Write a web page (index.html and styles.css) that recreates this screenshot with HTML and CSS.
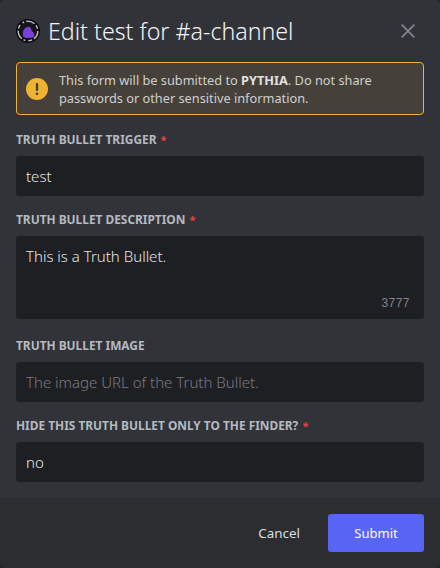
FILE: index.html
```html
<!DOCTYPE html>
<html lang="en">
<head>
<meta charset="utf-8">
<title>Edit test</title>
<link rel="stylesheet" href="styles.css">
</head>
<body>
<div class="modal">
  <header class="head">
    <svg class="avatar" viewBox="0 0 24 24" width="24" height="24">
      <circle cx="12" cy="12" r="12" fill="#0b0b0e"/>
      <circle cx="12" cy="12" r="9.8" fill="none" stroke="#b9b9c0" stroke-width="1.5" stroke-dasharray="9 2 4 3 2 2"/>
      <circle cx="12" cy="12" r="8.4" fill="#17141d"/>
      <path d="M7 17.4 C6.2 13 8 8.4 11.8 7.8 C14.6 7.4 15.4 9.6 15.6 11.4 C17.4 13.2 18.8 15.6 18.4 17.8 C14.6 19.6 10.4 19.4 7 17.4 Z" fill="#7c3fd8"/>
    </svg>
    <h1 class="title">Edit test for #a-channel</h1>
    <svg class="close" viewBox="0 0 14 14" width="14" height="14">
      <path d="M0.6 0.6 L13.4 13.4 M13.4 0.6 L0.6 13.4" stroke="#80848e" stroke-width="1.8" fill="none"/>
    </svg>
  </header>
  <div class="notice">
    <svg class="warn" viewBox="0 0 22 22" width="22" height="22">
      <circle cx="11" cy="11" r="11" fill="#f0b232"/>
      <rect x="9.8" y="5" width="2.4" height="8" rx="1" fill="#45413a"/>
      <circle cx="11" cy="15.8" r="1.4" fill="#45413a"/>
    </svg>
    <p class="notice-text">This form will be submitted to <strong>PYTHIA</strong>. Do not share passwords or other sensitive information.</p>
  </div>
  <form class="form">
    <div class="field">
      <label class="label">Truth Bullet Trigger <span class="req">*</span></label>
      <input class="input" value="test">
    </div>
    <div class="field">
      <label class="label">Truth Bullet Description <span class="req">*</span></label>
      <div class="area-wrap">
        <textarea class="input area">This is a Truth Bullet.</textarea>
        <span class="count">3777</span>
      </div>
    </div>
    <div class="field">
      <label class="label">Truth Bullet Image</label>
      <input class="input" placeholder="The image URL of the Truth Bullet.">
    </div>
    <div class="field">
      <label class="label">Hide this Truth Bullet only to the finder? <span class="req">*</span></label>
      <input class="input" value="no">
    </div>
  </form>
  <footer class="foot">
    <button class="btn cancel" type="button">Cancel</button>
    <button class="btn submit" type="button">Submit</button>
  </footer>
</div>
</body>
</html>
```
FILE: styles.css
```css
* { box-sizing: border-box; }
html, body { margin: 0; height: 100%; background: #1e1f22; }
body { font-family: "Noto Sans", "Open Sans", sans-serif; overflow: hidden; }
.modal {
  width: 440px; height: 568px; background: #313338; border-radius: 4px;
  display: flex; flex-direction: column; overflow: hidden;
}
.head { flex: none; display: flex; align-items: center; height: 62px; padding: 0 25px 0 16px; }
.avatar { flex: none; margin-right: 8px; }
.title { margin: 0; flex: 1; font-size: 23.2px; font-weight: 300; color: #f2f3f5; line-height: 30px; white-space: nowrap; }
.close { flex: none; }
.notice {
  flex: none; margin: 0 16px; height: 53px; padding: 0 9px; display: flex; align-items: center; gap: 11px;
  background: #45413a; border: 1px solid #f0b232; border-radius: 4px;
}
.warn { flex: none; }
.notice-text { margin: 0; font-size: 12.75px; line-height: 18px; color: #cfcfcf; }
.notice-text strong { font-weight: 700; color: #e0e1e2; }
.form { padding: 18px 16px 16px; display: flex; flex-direction: column; gap: 17px; flex: 1; }
.field { display: flex; flex-direction: column; gap: 10px; }
.label { font-size: 11.9px; line-height: 13px; font-weight: 700; letter-spacing: 0; text-transform: uppercase; color: #b5bac1; white-space: nowrap; }
.req { color: #f23f42; font-size: 11px; margin-left: 1px; }
.input {
  display: block; width: 100%; height: 40px; padding: 0 10px; border: 0; border-radius: 3px;
  background: #1e1f22; color: #e3e5e8; font: 300 15px/20px "Noto Sans", "Open Sans", sans-serif; outline: none;
}
.input::placeholder { color: #787a82; opacity: 1; }
.area-wrap { position: relative; padding-bottom: 3px; }
.area { height: 83px; padding: 10px; resize: none; }
.count { position: absolute; right: 14px; bottom: 11px; font: 12px/15px "Liberation Sans", sans-serif; color: #80848e; letter-spacing: .04em; }
.foot { flex: none; height: 70px; background: #2b2d31; padding: 0 16px; display: flex; align-items: center; justify-content: flex-end; }
.btn { height: 38px; border: 0; border-radius: 3px; font: 400 13.4px/16px "Noto Sans", "Open Sans", sans-serif; color: #fff; background: none; }
.cancel { color: #dbdee1; padding: 0 16px; margin-right: 12px; }
.submit { width: 96px; background: #5865f2; font-size: 13px; }
```
